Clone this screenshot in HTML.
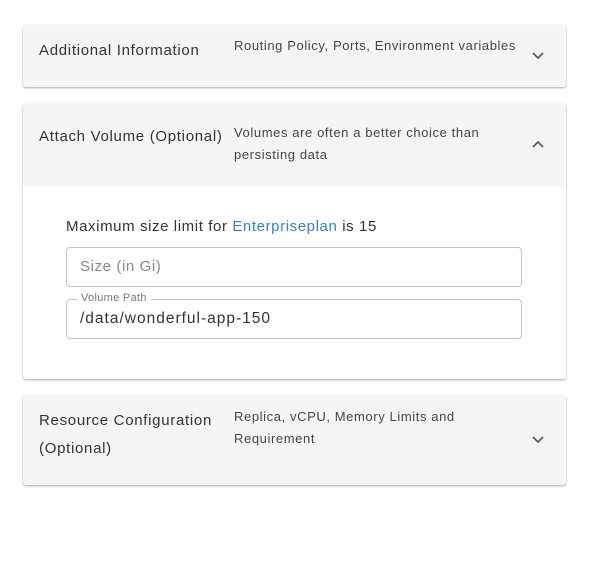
<!DOCTYPE html>
<html><head><style>
body{margin:0;width:607px;height:571px;background:#fff;font-family:"Liberation Sans",sans-serif;position:relative;overflow:hidden}
.card{position:absolute;left:23px;width:543px;background:#f5f5f5;border-radius:3px;box-shadow:0 1px 2px rgba(0,0,0,.35)}
.t{position:absolute;left:16px;font-size:15px;letter-spacing:0.7px;color:#333;line-height:28px}
.d{position:absolute;left:211px;font-size:13px;letter-spacing:0.6px;color:#444;line-height:22px}
.ch{position:absolute;left:508px}
.in{position:absolute;left:66px;width:454px;height:38px;border:1px solid #c4c4c4;border-radius:4px;background:#fff}
</style></head><body>
<div class="card" style="top:25px;height:62px">
 <div class="t" style="top:12px">Additional Information</div>
 <div class="d" style="top:10px">Routing Policy, Ports, Environment variables</div>
 <svg class="ch" style="top:26px" width="14" height="10"><path d="M2 2l5 5 5-5" fill="none" stroke="#555" stroke-width="1.6"/></svg>
</div>
<div class="card" style="top:103px;height:276px;background:#fff">
 <div style="position:absolute;left:0;top:0;width:543px;height:84px;background:#f5f5f5;border-radius:3px 3px 0 0"></div>
 <div class="t" style="top:20px">Attach Volume (Optional)</div>
 <div class="d" style="top:19px">Volumes are often a better choice than<br>persisting data</div>
 <svg class="ch" style="top:37px" width="14" height="10"><path d="M2 7l5-5 5 5" fill="none" stroke="#555" stroke-width="1.6"/></svg>
</div>
<div style="position:absolute;left:66px;top:216px;font-size:15px;letter-spacing:0.6px;color:#333;line-height:22px">Maximum size limit for <span style="color:#3b7ddd">Enterpriseplan</span> is 15</div>
<div class="in" style="top:247px"><div style="position:absolute;left:13px;top:10px;font-size:15px;letter-spacing:0.6px;color:#888">Size (in Gi)</div></div>
<div class="in" style="top:299px"><div style="position:absolute;left:10px;top:-8px;background:#fff;padding:0 4px;font-size:11px;letter-spacing:0.3px;color:#777">Volume Path</div><div style="position:absolute;left:13px;top:10px;font-size:15.5px;letter-spacing:1px;color:#333">/data/wonderful-app-150</div></div>
<div class="card" style="top:395px;height:90px">
 <div class="t" style="top:12px">Resource Configuration<br>(Optional)</div>
 <div class="d" style="top:11px">Replica, vCPU, Memory Limits and<br>Requirement</div>
 <svg class="ch" style="top:40px" width="14" height="10"><path d="M2 2l5 5 5-5" fill="none" stroke="#555" stroke-width="1.6"/></svg>
</div>
</body></html>
